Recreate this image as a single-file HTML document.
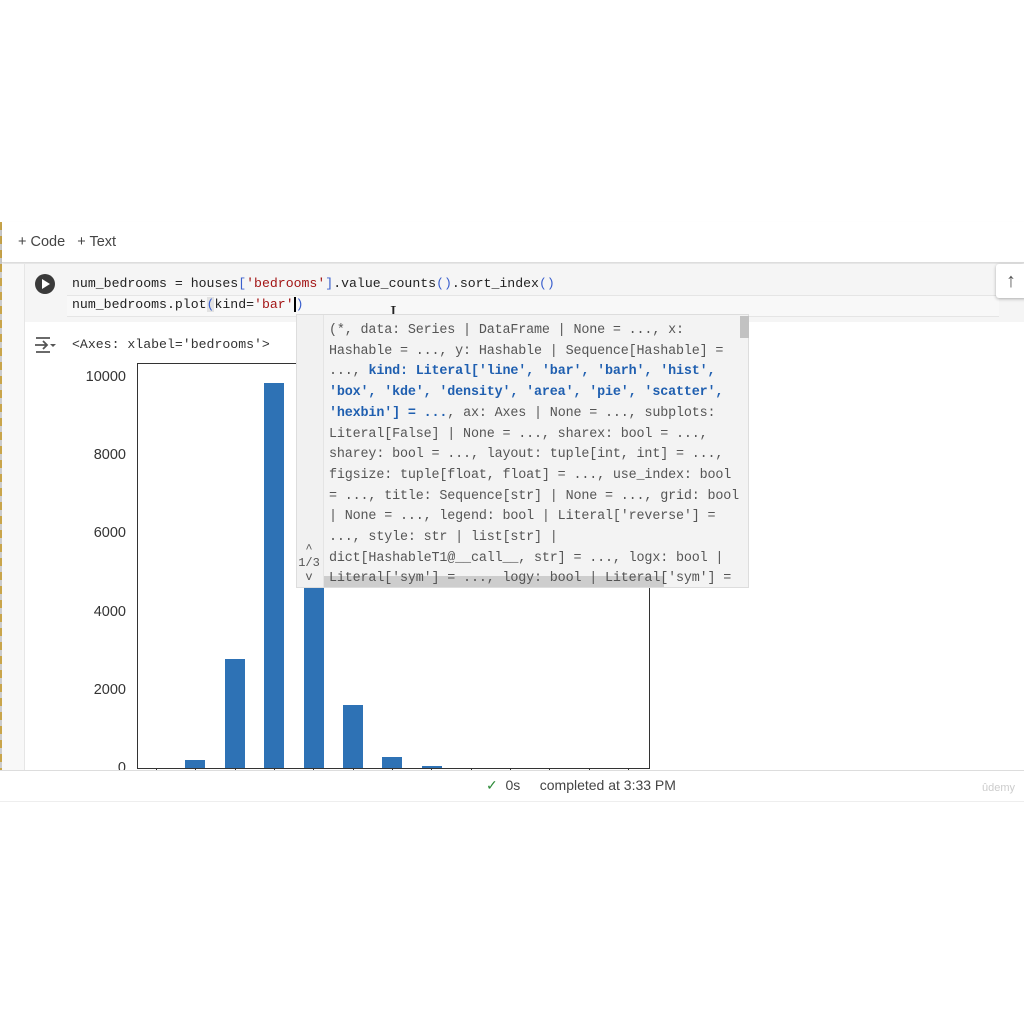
<!DOCTYPE html>
<html><head><meta charset="utf-8"><style>
body{margin:0;width:1024px;height:1024px;background:#fff;position:relative;overflow:hidden;font-family:"Liberation Sans",sans-serif}
.a{position:absolute}
.mono{font-family:"Liberation Mono",monospace;white-space:pre}
.code{font-size:13.2px;letter-spacing:0;color:#222}
.pop{font-size:13.4px;letter-spacing:-0.15px;color:#555;line-height:20.7px}
.b{color:#1f5fb0;font-weight:bold}
.bar{position:absolute;background:#2e72b5;width:20px}
.yt{position:absolute;right:898px;font-size:14.5px;color:#333;text-align:right}
.tk{position:absolute;top:768px;width:1px;height:4px;background:#333}
</style></head><body>
<div class="a" style="left:0;top:222px;width:2px;height:578px;background:repeating-linear-gradient(#c9a54a 0 8px,#ccc 8px 14px)"></div>
<div class="a" style="left:2px;top:222px;width:1022px;height:40px;background:#fff;border-bottom:1px solid #ddd;box-shadow:0 2px 3px rgba(0,0,0,.12)"></div>
<div class="a" style="left:18px;top:234px;font-size:14.5px;color:#444">+ Code&nbsp;&nbsp;&nbsp;+ Text</div>
<div class="a" style="left:2px;top:264px;width:22px;height:506px;background:#f8f8f8"></div>
<div class="a" style="left:24px;top:264px;width:1000px;height:58px;background:#f5f5f5;border-left:1px solid #e6e6e6"></div>
<div class="a" style="left:67px;top:273px;width:932px;height:22px;border-bottom:1px solid #e5e5e5"></div>
<div class="a" style="left:67px;top:296px;width:932px;height:20px;border-bottom:1px solid #e5e5e5;background:#f8f8f8"></div>
<div class="a" style="left:35px;top:274px;width:20px;height:20px;border-radius:50%;background:#3a3a3a"></div>
<div class="a" style="left:42px;top:279px;width:0;height:0;border-left:8px solid #fff;border-top:5px solid transparent;border-bottom:5px solid transparent"></div>
<div class="a" style="left:996px;top:264px;width:30px;height:34px;background:#fff;box-shadow:0 1px 3px rgba(0,0,0,.3);border-radius:3px 0 0 3px;font-size:20px;color:#555;text-align:center;line-height:34px">↑</div>
<div class="a mono code" style="left:72px;top:276px">num_bedrooms = houses<span style="color:#3a5fcd">[</span><span style="color:#a31515">'bedrooms'</span><span style="color:#3a5fcd">]</span>.value_counts<span style="color:#3a5fcd">()</span>.sort_index<span style="color:#3a5fcd">()</span></div>
<div class="a mono code" style="left:72px;top:297px">num_bedrooms.plot<span style="color:#3a5fcd;background:#e2e2e2">(</span>kind=<span style="color:#a31515">'bar'</span><span style="border-left:2px solid #000;color:#3a5fcd">)</span></div>
<div class="a" style="left:390px;top:302px;font-size:20px;color:#222;font-family:'Liberation Serif',serif">I</div>
<div class="a" style="left:24px;top:322px;width:1000px;height:448px;border-left:1px solid #e6e6e6"></div>
<svg class="a" style="left:33px;top:335px" width="24" height="20" viewBox="0 0 24 20"><path d="M3 3h14M3 17h14M2 10h12M10 6l4 4-4 4" stroke="#555" stroke-width="1.8" fill="none"/><path d="M17 9l3 3 3-3z" fill="#555"/></svg>
<div class="a mono" style="left:72px;top:337px;font-size:13.2px;color:#333">&lt;Axes: xlabel='bedrooms'&gt;</div>
<div class="a" style="left:137px;top:363px;width:511px;height:404px;border:1.5px solid #333"></div>
<div class="yt" style="top:369px">10000</div>
<div class="yt" style="top:447px">8000</div>
<div class="yt" style="top:525px">6000</div>
<div class="yt" style="top:604px">4000</div>
<div class="yt" style="top:682px">2000</div>
<div class="yt" style="top:760px">0</div>
<div class="bar" style="left:185px;top:760px;height:8px"></div>
<div class="bar" style="left:225px;top:659px;height:109px"></div>
<div class="bar" style="left:264px;top:383px;height:385px"></div>
<div class="bar" style="left:304px;top:498px;height:270px"></div>
<div class="bar" style="left:343px;top:705px;height:63px"></div>
<div class="bar" style="left:382px;top:757px;height:11px"></div>
<div class="bar" style="left:422px;top:766px;height:2px"></div>
<div class="tk" style="left:156px"></div><div class="tk" style="left:195px"></div><div class="tk" style="left:235px"></div><div class="tk" style="left:274px"></div><div class="tk" style="left:313px"></div><div class="tk" style="left:353px"></div><div class="tk" style="left:392px"></div><div class="tk" style="left:431px"></div><div class="tk" style="left:471px"></div><div class="tk" style="left:510px"></div><div class="tk" style="left:549px"></div><div class="tk" style="left:589px"></div><div class="tk" style="left:628px"></div>
<div class="a" style="left:0;top:770px;width:1024px;height:30px;background:#fff;border-top:1px solid #ddd;border-bottom:1px solid #eee"></div>
<div class="a" style="left:486px;top:777px;font-size:14px;color:#444"><span style="color:#2e8b3a">✓</span>&nbsp; 0s&nbsp;&nbsp;&nbsp;&nbsp; completed at 3:33 PM</div>
<div class="a" style="left:982px;top:782px;font-size:11px;color:#ccc">ûdemy</div>
<div class="a" style="left:296px;top:314px;width:453px;height:274px;background:#f3f3f3;border:1px solid #ddd;box-sizing:border-box"></div>
<div class="a" style="left:297px;top:315px;width:26px;height:272px;background:#f1f1f1;border-right:1px solid #e4e4e4"></div>
<div class="a" style="left:298px;top:542px;font-size:12px;color:#555;text-align:center;width:22px;line-height:14px;font-family:'Liberation Mono',monospace">^<br>1/3<br>v</div>
<div class="a" style="left:740px;top:316px;width:9px;height:22px;background:#c2c2c2"></div>
<div class="a" style="left:324px;top:576px;width:340px;height:11px;background:rgba(180,180,180,.6)"></div>
<div class="a mono pop" style="left:329px;top:321px;width:410px;height:265px;overflow:hidden">(*, data: Series | DataFrame | None = ..., x:
Hashable = ..., y: Hashable | Sequence[Hashable] =
..., <span class="b">kind: Literal['line', 'bar', 'barh', 'hist',</span>
<span class="b">'box', 'kde', 'density', 'area', 'pie', 'scatter',</span>
<span class="b">'hexbin'] = ...</span>, ax: Axes | None = ..., subplots:
Literal[False] | None = ..., sharex: bool = ...,
sharey: bool = ..., layout: tuple[int, int] = ...,
figsize: tuple[float, float] = ..., use_index: bool
= ..., title: Sequence[str] | None = ..., grid: bool
| None = ..., legend: bool | Literal['reverse'] =
..., style: str | list[str] |
dict[HashableT1@__call__, str] = ..., logx: bool |
Literal['sym'] = ..., logy: bool | Literal['sym'] =</div>
</body></html>
